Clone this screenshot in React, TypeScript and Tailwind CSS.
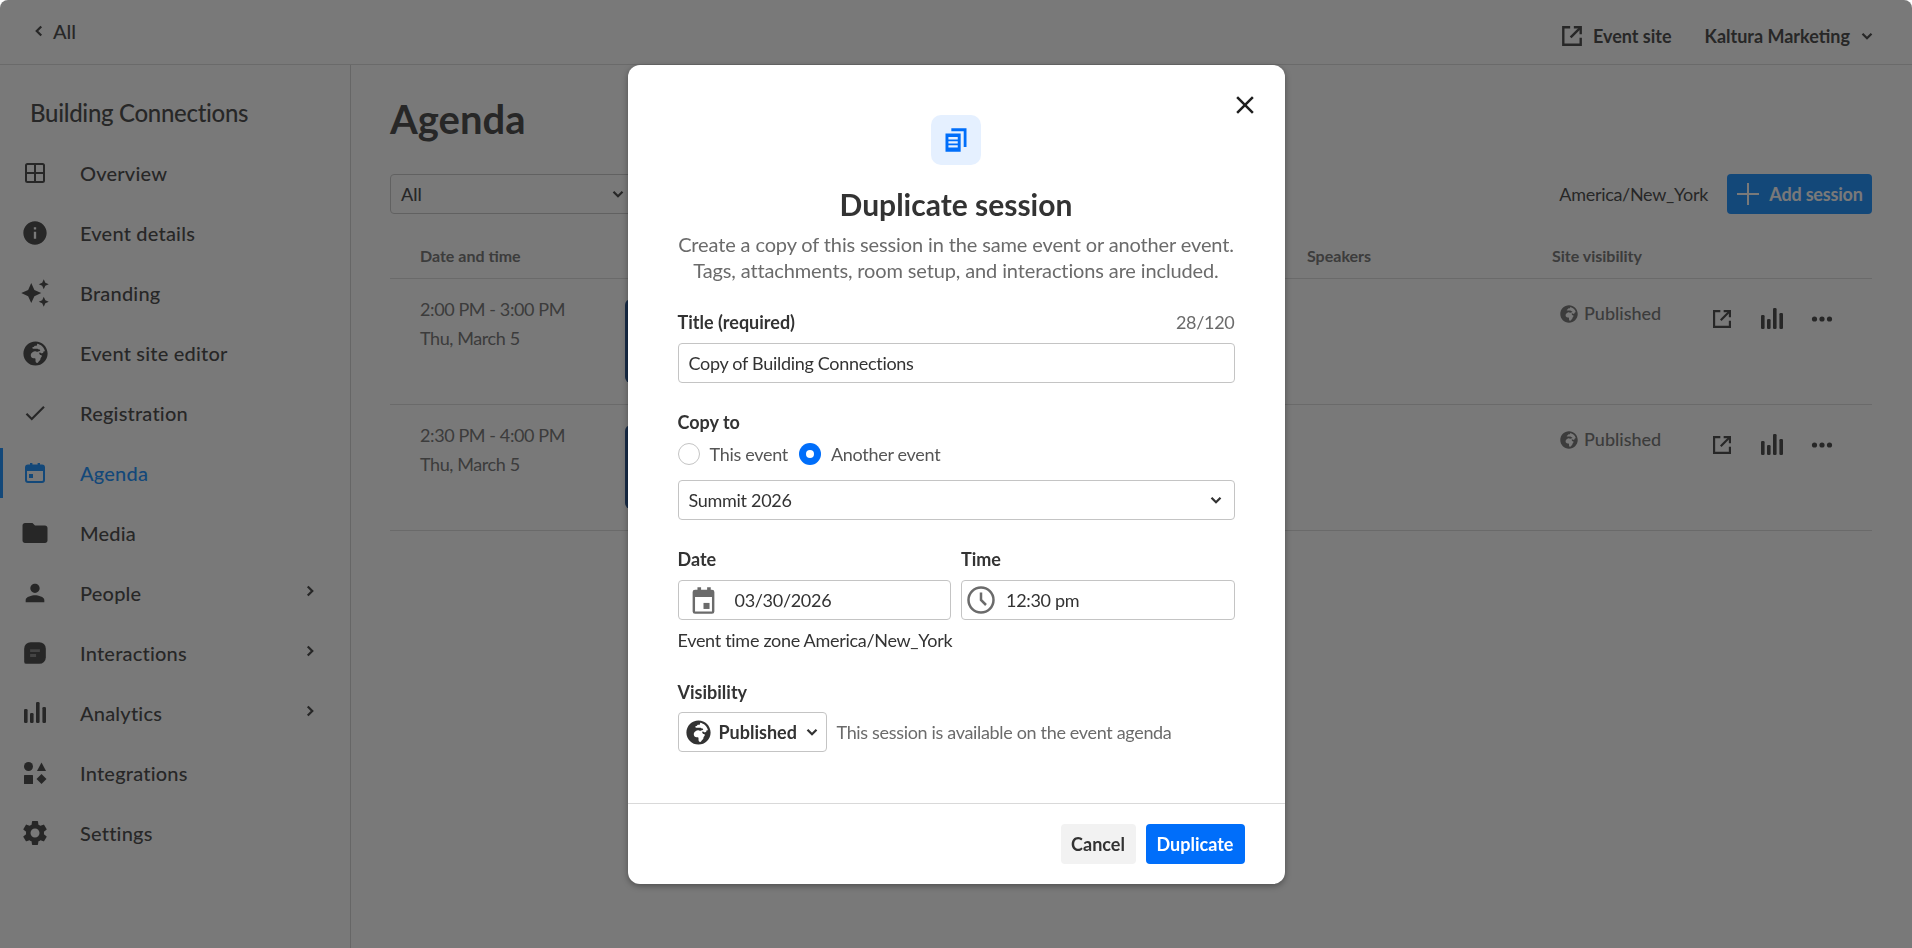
import { FaGlobeAfrica } from 'react-icons/fa';
import { MdAutoAwesome, MdCheck, MdClose, MdFolder, MdInfo, MdPerson, MdSettings } from 'react-icons/md';

function Chevron({ dir = 'down', className = '' }: { dir?: 'down' | 'left' | 'right'; className?: string }) {
    const points = dir === 'down' ? '6,9 12,15 18,9' : dir === 'left' ? '15,6 9,12 15,18' : '9,6 15,12 9,18';
    return (
        <svg viewBox="0 0 24 24" fill="none" stroke="currentColor" strokeWidth="3" className={className}>
            <polyline points={points} />
        </svg>
    );
}

function ExternalIcon({ className = '' }: { className?: string }) {
    return (
        <svg viewBox="0 0 24 24" fill="none" stroke="currentColor" strokeWidth="2.6" className={className}>
            <path d="M10 2.5H2.5v19h19V14" />
            <path d="M14 2.5h7.5V10" />
            <path d="M21.5 2.5 10.5 13.5" />
        </svg>
    );
}

function BarsIcon({ className = '' }: { className?: string }) {
    return (
        <svg viewBox="0 0 24 24" fill="currentColor" className={className}>
            <rect x="1" y="8" width="3.6" height="14" rx="1.2" />
            <rect x="7" y="12" width="3.6" height="10" rx="1.2" />
            <rect x="13" y="1" width="3.6" height="21" rx="1.2" />
            <rect x="19.4" y="6" width="3.6" height="16" rx="1.2" />
        </svg>
    );
}

function GridIcon({ className = '' }: { className?: string }) {
    return (
        <svg viewBox="0 0 24 24" fill="none" stroke="currentColor" strokeWidth="2" className={className}>
            <rect x="3" y="3" width="18" height="18" rx="1.5" />
            <path d="M12 3v18M3 12h18" />
        </svg>
    );
}

function CalendarIcon({ className = '' }: { className?: string }) {
    return (
        <svg viewBox="0 0 24 24" fill="none" className={className}>
            <rect x="3" y="4.5" width="18" height="16.5" rx="2" stroke="currentColor" strokeWidth="2" />
            <path d="M3 5h18v5H3z M7 2h2.4v4H7z M14.6 2H17v4h-2.4z" fill="currentColor" />
            <rect x="6" y="13" width="4" height="4" fill="currentColor" />
        </svg>
    );
}

function ChatIcon({ className = '' }: { className?: string }) {
    return (
        <svg viewBox="0 0 24 24" className={className}>
            <path fill="currentColor" d="M8 2h8a6 6 0 0 1 6 6v8a6 6 0 0 1-6 6H4a2 2 0 0 1-2-2V8a6 6 0 0 1 6-6Z" />
            <path fill="#7a7a7a" d="M7.5 8.5h9v2.6h-9zM7.5 13h5.5v2.6H7.5z" />
        </svg>
    );
}

function ShapesIcon({ className = '' }: { className?: string }) {
    return (
        <svg viewBox="0 0 24 24" fill="currentColor" className={className}>
            <circle cx="5.5" cy="5.5" r="4.5" />
            <path d="M18.5 1.5 23 10h-9Z" />
            <rect x="1" y="14" width="9" height="9" rx="0.5" />
            <path d="m18.5 13 5 5-5 5-5-5Z" />
        </svg>
    );
}

const navItems = [
    { label: 'Overview', icon: <GridIcon className="w-6 h-6" /> },
    { label: 'Event details', icon: <MdInfo className="w-7 h-7" /> },
    { label: 'Branding', icon: <MdAutoAwesome className="w-[30px] h-[30px]" /> },
    { label: 'Event site editor', icon: <FaGlobeAfrica className="w-[25px] h-[25px]" /> },
    { label: 'Registration', icon: <MdCheck className="w-[26px] h-[26px]" /> },
    { label: 'Agenda', icon: <CalendarIcon className="w-6 h-6" />, active: true },
    { label: 'Media', icon: <MdFolder className="w-[30px] h-[30px]" /> },
    { label: 'People', icon: <MdPerson className="w-7 h-7" />, arrow: true },
    { label: 'Interactions', icon: <ChatIcon className="w-[26px] h-[26px]" />, arrow: true },
    { label: 'Analytics', icon: <BarsIcon className="w-6 h-6" />, arrow: true },
    { label: 'Integrations', icon: <ShapesIcon className="w-6 h-6" /> },
    { label: 'Settings', icon: <MdSettings className="w-[30px] h-[30px]" /> },
];

const sessions = [
    { time: '2:00 PM - 3:00 PM', date: 'Thu, March 5' },
    { time: '2:30 PM - 4:00 PM', date: 'Thu, March 5' },
];

function Sidebar() {
    return (
        <aside className="w-[351px] shrink-0 border-r border-[#cfcfcf] pt-[33px]">
            <div className="pl-[30px] text-[24px] leading-[30px] font-medium tracking-[-0.3px] text-[#333333] mb-[20px]">Building Connections</div>
            <nav>
                {navItems.map((item) => (
                    <div
                        key={item.label}
                        className={`h-[50px] mb-[10px] flex items-center border-l-[3px] ${item.active ? 'border-[#0084ff] text-[#0084ff]' : 'border-transparent text-[#333333]'}`}
                    >
                        <span className="w-[64px] pl-[2px] flex justify-center shrink-0 -ml-[1px]">{item.icon}</span>
                        <span className="text-[20px] font-medium tracking-[0.2px] ml-[14px]">{item.label}</span>
                        {item.arrow && <Chevron dir="right" className="w-[18px] h-[18px] absolute left-[301px] -mt-[5px]" />}
                    </div>
                ))}
            </nav>
        </aside>
    );
}

function Agenda() {
    return (
        <main className="flex-1 pl-[39px] pr-[40px] pt-[26px]">
            <h1 className="text-[40px] leading-[56px] font-bold text-[#333333]">Agenda</h1>
            <div className="mt-[27px] flex items-center">
                <div className="w-[245px] h-10 border border-[#c4c4c4] rounded-[4px] pl-[10px] pr-[7px] flex items-center justify-between text-[18px] font-medium text-[#333333]">
                    All
                    <Chevron className="w-[18px] h-[18px]" />
                </div>
                <span className="ml-auto text-[18px] tracking-[-0.3px] text-[#333333]">America/New_York</span>
                <button className="ml-[19px] w-[145px] h-10 rounded-[4px] bg-[#0084ff] text-white flex items-center justify-center gap-[9px] text-[18px] font-bold tracking-[-0.2px]">
                    <svg viewBox="0 0 24 24" fill="none" stroke="currentColor" strokeWidth="2" className="w-6 h-6">
                        <path d="M12 1v22M1 12h22" />
                    </svg>
                    Add session
                </button>
            </div>
            <div className="mt-[24px] grid grid-cols-[235px_682px_245px_1fr] h-[41px] items-start pt-[6px] border-b border-[#d9d9d9] text-[16px] font-bold text-[#666666]">
                <span className="pl-[30px]">Date and time</span>
                <span />
                <span>Speakers</span>
                <span>Site visibility</span>
            </div>
            {sessions.map((s) => (
                <div key={s.time} className="grid grid-cols-[235px_682px_245px_1fr] h-[126px] border-b border-[#d9d9d9]">
                    <div className="pl-[30px] pt-[16px] text-[18px] leading-[29px] tracking-[-0.4px] text-[#666666]">
                        <div>{s.time}</div>
                        <div>{s.date}</div>
                    </div>
                    <div className="pt-[20px]">
                        <div className="h-[84px] w-[60px] rounded-l-[6px] bg-[#0a3d80]" />
                    </div>
                    <div />
                    <div className="pt-[21px] pl-[8px] flex items-start">
                        <span className="flex items-center gap-[6px] w-[152px] text-[18px] font-medium text-[#666666]">
                            <FaGlobeAfrica className="w-[18px] h-[18px]" />
                            Published
                        </span>
                        <span className="flex items-center gap-[28px] mt-[7px] text-[#333333]">
                            <ExternalIcon className="w-[20px] h-[20px]" />
                            <BarsIcon className="w-6 h-6" />
                            <svg viewBox="0 0 24 24" fill="currentColor" className="w-6 h-6 -ml-[2px]">
                                <circle cx="4.5" cy="12" r="2.6" />
                                <circle cx="12" cy="12" r="2.6" />
                                <circle cx="19.5" cy="12" r="2.6" />
                            </svg>
                        </span>
                    </div>
                </div>
            ))}
        </main>
    );
}

function FieldBox({ className = '', children }: { className?: string; children: React.ReactNode }) {
    return (
        <div className={`h-10 border border-[#c4c4c4] rounded-[4px] flex items-center text-[18px] tracking-[-0.3px] text-[#333333] ${className}`}>
            {children}
        </div>
    );
}

function DuplicateModal() {
    return (
        <div className="fixed inset-0 flex items-start justify-center pt-[65px]">
            <div className="relative w-[657px] h-[819px] bg-white rounded-[12px] shadow-[0_2px_6px_rgba(0,0,0,0.35)] flex flex-col text-[#333333]">
                <button className="absolute right-[25px] top-[25px] text-[#1f1f1f]">
                    <MdClose className="w-[30px] h-[30px]" />
                </button>
                <div className="flex-1 px-[50px] pt-[50px]">
                    <div className="mx-auto w-[50px] h-[50px] rounded-[10px] bg-[#e5f0ff] flex items-center justify-center text-[#006efa]">
                        <svg viewBox="0 0 24 24" fill="currentColor" className="w-7 h-7">
                            <path d="M8 2h13v16h-2.4V4.4H8z" />
                            <path fillRule="evenodd" d="M3 6.5h13V22H3zM5.5 9.5v2h8v-2zm0 3.5v2h8v-2zm0 3.5v2h8v-2z" />
                        </svg>
                    </div>
                    <h2 className="mt-[20px] text-center text-[30px] leading-[38px] font-bold">Duplicate session</h2>
                    <p className="mt-[8px] text-center text-[20px] leading-[26px] tracking-[-0.13px] text-[#6b6b6b]">
                        Create a copy of this session in the same event or another event.
                        <br />
                        Tags, attachments, room setup, and interactions are included.
                    </p>

                    <div className="mt-[27px] flex items-end justify-between">
                        <label className="text-[18px] leading-[24px] font-bold">Title (required)</label>
                        <span className="text-[18px] leading-[24px] tracking-[-0.3px] text-[#6b6b6b]">28/120</span>
                    </div>
                    <FieldBox className="mt-[9px] px-[10px]">Copy of Building Connections</FieldBox>

                    <div className="mt-[27px] text-[18px] leading-[24px] font-bold">Copy to</div>
                    <div className="mt-[8px] flex items-center h-[24px] text-[18px] tracking-[-0.3px]">
                        <span className="w-[22px] h-[22px] rounded-full border border-[#c4c4c4]" />
                        <span className="ml-[10px] text-[#555555]">This event</span>
                        <span className="ml-[11px] w-[22px] h-[22px] rounded-full bg-[#006efa] flex items-center justify-center">
                            <span className="w-[8px] h-[8px] rounded-full bg-white" />
                        </span>
                        <span className="ml-[10px] text-[#555555]">Another event</span>
                    </div>
                    <FieldBox className="mt-[14px] pl-[10px] pr-[9px] justify-between">
                        Summit 2026
                        <Chevron className="w-[18px] h-[18px]" />
                    </FieldBox>

                    <div className="mt-[27px] grid grid-cols-2 gap-x-[10px]">
                        <div>
                            <div className="text-[18px] leading-[24px] font-bold">Date</div>
                            <FieldBox className="mt-[9px] pl-[10px]">
                                <svg viewBox="0 0 24 24" className="w-[29px] h-[29px] text-[#6b6b6b]">
                                    <path fill="currentColor" fillRule="evenodd" d="M7 1h3v2h5V1h3v2h1a2 2 0 0 1 2 2v16a2 2 0 0 1-2 2H5a2 2 0 0 1-2-2V5a2 2 0 0 1 2-2h2zM5 9v12h14V9z" />
                                    <rect x="12" y="14" width="5" height="5" fill="currentColor" />
                                </svg>
                                <span className="ml-[17px]">03/30/2026</span>
                            </FieldBox>
                        </div>
                        <div>
                            <div className="text-[18px] leading-[24px] font-bold">Time</div>
                            <FieldBox className="mt-[9px] pl-[4px]">
                                <svg viewBox="0 0 24 24" fill="none" stroke="currentColor" strokeWidth="2" className="w-[30px] h-[30px] text-[#6b6b6b]">
                                    <circle cx="12" cy="12" r="10" />
                                    <path d="M12 6v6l4 4" />
                                </svg>
                                <span className="ml-[10px]">12:30 pm</span>
                            </FieldBox>
                        </div>
                    </div>
                    <div className="mt-[8px] text-[18px] leading-[24px] tracking-[-0.3px]">Event time zone America/New_York</div>

                    <div className="mt-[28px] text-[18px] leading-[24px] font-bold">Visibility</div>
                    <div className="mt-[8px] flex items-center">
                        <div className="w-[149px] h-10 border border-[#c4c4c4] rounded-[4px] flex items-center pl-[7px] gap-[8px] text-[18px] font-bold">
                            <FaGlobeAfrica className="w-[25px] h-[25px]" />
                            Published
                            <Chevron className="w-[18px] h-[18px] -ml-[2px]" />
                        </div>
                        <span className="ml-[10px] text-[18px] tracking-[-0.33px] text-[#6b6b6b]">This session is available on the event agenda</span>
                    </div>
                </div>
                <div className="h-[81px] border-t border-[#d9d9d9] flex justify-end items-start pt-[20px] pr-[40px] gap-[10px]">
                    <button className="w-[75px] h-10 rounded-[4px] bg-[#f2f2f2] text-[18px] font-bold">Cancel</button>
                    <button className="w-[99px] h-10 rounded-[4px] bg-[#006efa] text-white text-[18px] font-bold">Duplicate</button>
                </div>
            </div>
        </div>
    );
}

export default function App() {
    return (
        <div className="relative h-[948px] overflow-hidden rounded-t-[8px] bg-white font-[family-name:Lato,sans-serif]">
            <header className="h-[65px] border-b border-[#d9d9d9] flex items-center text-[#333333]">
                <div className="pl-[30px] flex items-center gap-[5px] text-[20px] font-medium -mt-[2px]">
                    <Chevron dir="left" className="w-[18px] h-[18px]" />
                    All
                </div>
                <div className="ml-auto flex items-center pr-[36px] pt-[8px] text-[18px] font-bold">
                    <ExternalIcon className="w-[22px] h-[22px]" />
                    <span className="ml-[10px]">Event site</span>
                    <span className="ml-[33px]">Kaltura Marketing</span>
                    <Chevron className="w-[18px] h-[18px] ml-[8px]" />
                </div>
            </header>
            <div className="flex h-[883px]">
                <Sidebar />
                <Agenda />
            </div>
            {/* dim layer over the page */}
            <div className="absolute inset-0 bg-[#202020]/60" />
            <DuplicateModal />
        </div>
    );
}
